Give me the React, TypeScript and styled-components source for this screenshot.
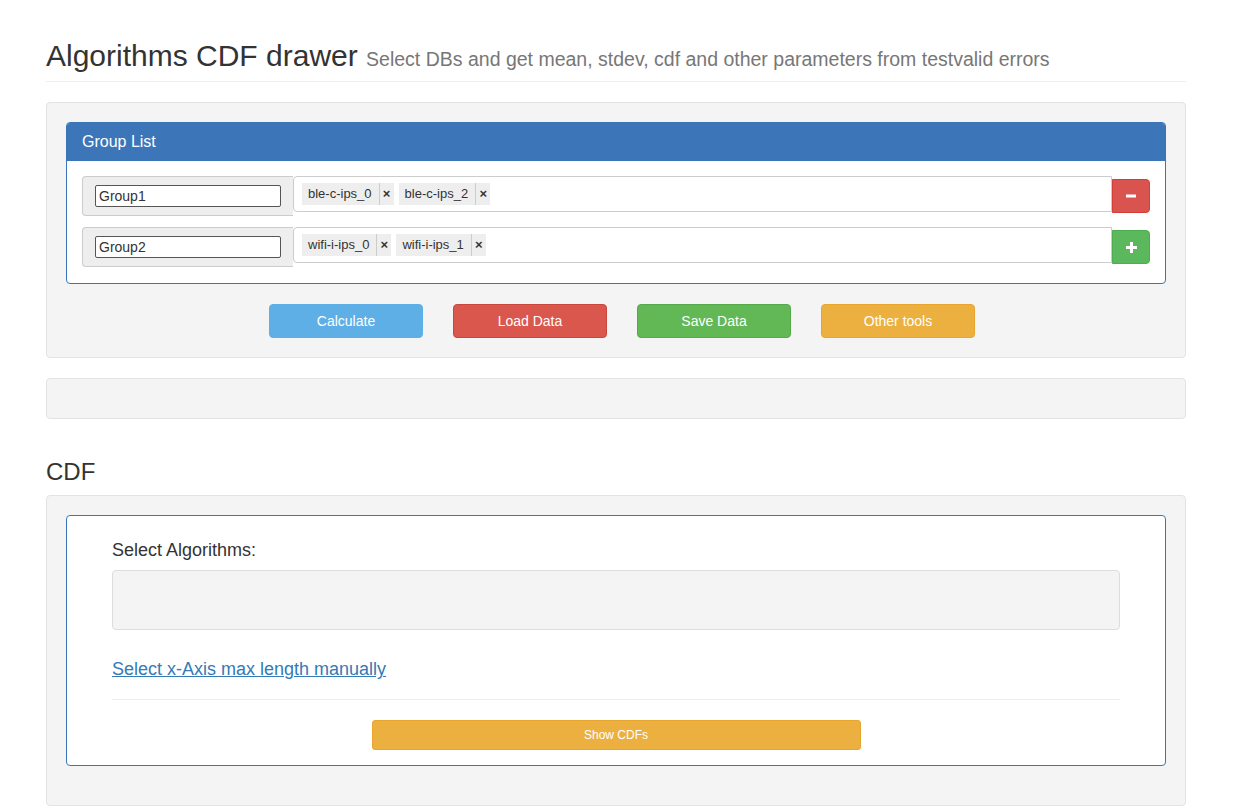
import React from "react";
import styled, { createGlobalStyle } from "styled-components";

const Global = createGlobalStyle`
  * { box-sizing: border-box; }
  html, body { margin: 0; padding: 0; background: #fff; }
  body {
    font-family: "Liberation Sans", Arial, sans-serif;
    font-size: 14px;
    line-height: 1.42857;
    color: #333;
  }
`;

const Container = styled.div`
  width: 1140px;
  margin-left: 46px;
`;

const PageHeader = styled.div`
  margin: 39px 0 20px;
  padding-bottom: 9px;
  border-bottom: 1px solid #eee;
`;

const Title = styled.h1`
  margin: 0;
  font-size: 30px;
  font-weight: 400;
  line-height: 1.1;
  color: #333;
`;

const Sub = styled.small`
  font-size: 65%;
  color: #777;
  font-weight: 400;
`;

const Well = styled.div`
  background: #f4f4f4;
  border: 1px solid #e3e3e3;
  border-radius: 4px;
  padding: 19px;
  min-height: 41px;
  margin-bottom: 20px;
`;

const Panel = styled.div`
  background: #fff;
  border: 1px solid #3a75b7;
  border-radius: 4px;
  margin-bottom: 20px;
  overflow: hidden;
`;

const PanelHeading = styled.div`
  background: #3c76b9;
  color: #fff;
  font-size: 16px;
  line-height: 18px;
  padding: 10px 15px;
`;

const PanelBody = styled.div`
  padding: 15px 15px 16px;
  display: flex;
  flex-direction: column;
  gap: 11px;
`;

const GroupRow = styled.div`
  display: flex;
  align-items: flex-start;
  height: 40px;
`;

const Addon = styled.div`
  width: 211px;
  height: 40px;
  flex: none;
  background: #eee;
  border: 1px solid #ccc;
  border-right: none;
  border-radius: 4px 0 0 4px;
  padding: 8px 12px 0 12px;
`;

const NameInput = styled.input`
  display: block;
  width: 186px;
  height: 22px;
  border: 1px solid #555;
  border-radius: 2px;
  padding: 1px 3px;
  font-family: "Liberation Sans", Arial, sans-serif;
  font-size: 14px;
  color: #333;
  background: #fff;
`;

const TagField = styled.div`
  flex: 1;
  height: 36px;
  background: #fff;
  border: 1px solid #ccc;
  border-radius: 4px 0 0 4px;
  padding: 6px 8px;
  display: flex;
  gap: 5px;
  align-items: flex-start;
`;

const Tag = styled.span`
  display: inline-flex;
  align-items: stretch;
  height: 22px;
  background: #eee;
  font-size: 13px;
  line-height: 22px;
  color: #333;
`;

const TagLabel = styled.span`
  padding: 0 7px 0 6px;
`;

const TagX = styled.span`
  border-left: 1px solid #ccc;
  width: 15px;
  text-align: center;
  font-weight: 700;
  font-size: 13px;
`;

const IconButton = styled.button<{ $color: string; $border: string }>`
  flex: none;
  margin-top: 3px;
  width: 38px;
  height: 34px;
  border: 1px solid ${(p) => p.$border};
  background: ${(p) => p.$color};
  border-radius: 0 4px 4px 0;
  display: flex;
  align-items: center;
  justify-content: center;
  padding: 0;
`;

const ActionRow = styled.div`
  display: flex;
  justify-content: center;
  gap: 30px;
  padding-left: 12px;
`;

const ActionButton = styled.button<{ $color: string; $border: string }>`
  width: 154px;
  height: 34px;
  border: 1px solid ${(p) => p.$border};
  background: ${(p) => p.$color};
  color: #fff;
  border-radius: 4px;
  font-family: "Liberation Sans", Arial, sans-serif;
  font-size: 14px;
  padding: 0;
`;

const SectionTitle = styled.h3`
  margin: 40px 0 10px;
  font-size: 24px;
  line-height: 1.1;
  font-weight: 400;
  color: #333;
`;

const CdfBody = styled.div`
  padding: 21px 45px 15px;
`;

const FieldLabel = styled.div`
  font-size: 18px;
  line-height: 26px;
  color: #333;
  margin-bottom: 7px;
`;

const AlgoBox = styled.div`
  height: 60px;
  background: #f4f4f4;
  border: 1px solid #ddd;
  border-radius: 4px;
`;

const Link = styled.a`
  display: block;
  margin-top: 26px;
  font-size: 18px;
  line-height: 26px;
  color: #337ab7;
  text-decoration: underline;
  width: max-content;
`;

const Rule = styled.hr`
  margin: 17px 0 20px;
  border: 0;
  border-top: 1px solid #eee;
`;

const ShowButton = styled.button`
  display: block;
  margin: 0 auto;
  width: 489px;
  height: 30px;
  background: #ecb040;
  border: 1px solid #e8a52d;
  border-radius: 3px;
  color: #fff;
  font-family: "Liberation Sans", Arial, sans-serif;
  font-size: 12px;
  padding: 0;
`;

const MinusIcon = () => (
  <svg width="10" height="4" viewBox="0 0 10 4">
    <rect x="0" y="0.5" width="10" height="3" fill="#fff" />
  </svg>
);

const PlusIcon = () => (
  <svg width="11" height="11" viewBox="0 0 11 11">
    <rect x="0" y="4" width="11" height="3" fill="#fff" />
    <rect x="4" y="0" width="3" height="11" fill="#fff" />
  </svg>
);

const groups = [
  { name: "Group1", tags: ["ble-c-ips_0", "ble-c-ips_2"], kind: "minus" },
  { name: "Group2", tags: ["wifi-i-ips_0", "wifi-i-ips_1"], kind: "plus" },
];

export default function App() {
  return (
    <>
      <Global />
      <Container>
        <PageHeader>
          <Title>
            Algorithms CDF drawer{" "}
            <Sub>Select DBs and get mean, stdev, cdf and other parameters from testvalid errors</Sub>
          </Title>
        </PageHeader>

        <Well>
          <Panel>
            <PanelHeading>Group List</PanelHeading>
            <PanelBody>
              {groups.map((g) => (
                <GroupRow key={g.name}>
                  <Addon>
                    <NameInput defaultValue={g.name} />
                  </Addon>
                  <TagField>
                    {g.tags.map((t) => (
                      <Tag key={t}>
                        <TagLabel>{t}</TagLabel>
                        <TagX>×</TagX>
                      </Tag>
                    ))}
                  </TagField>
                  {g.kind === "minus" ? (
                    <IconButton $color="#d9534f" $border="#d43f3a">
                      <MinusIcon />
                    </IconButton>
                  ) : (
                    <IconButton $color="#5cb85c" $border="#4cae4c">
                      <PlusIcon />
                    </IconButton>
                  )}
                </GroupRow>
              ))}
            </PanelBody>
          </Panel>
          <ActionRow>
            <ActionButton $color="#5dafe6" $border="#5dafe6">Calculate</ActionButton>
            <ActionButton $color="#d9574c" $border="#c9463d">Load Data</ActionButton>
            <ActionButton $color="#62b855" $border="#55a94a">Save Data</ActionButton>
            <ActionButton $color="#ecb040" $border="#e8a52d">Other tools</ActionButton>
          </ActionRow>
        </Well>

        <Well />

        <SectionTitle>CDF</SectionTitle>
        <Well>
          <Panel>
            <CdfBody>
              <FieldLabel>Select Algorithms:</FieldLabel>
              <AlgoBox />
              <Link href="#">Select x-Axis max length manually</Link>
              <Rule />
              <ShowButton>Show CDFs</ShowButton>
            </CdfBody>
          </Panel>
        </Well>
      </Container>
    </>
  );
}
